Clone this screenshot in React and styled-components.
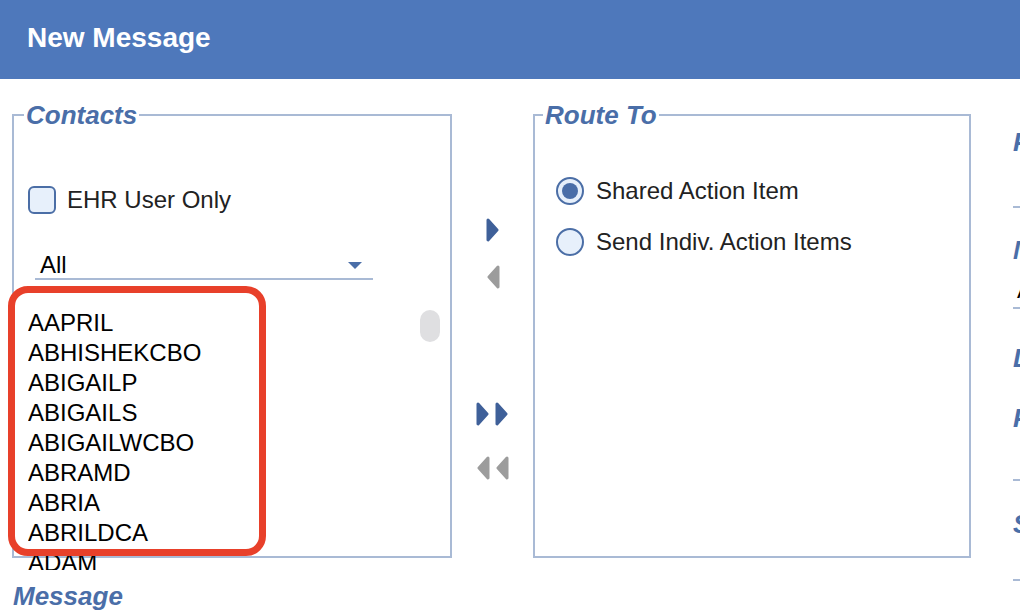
import React from 'react';
import styled, { createGlobalStyle } from 'styled-components';

const GlobalStyle = createGlobalStyle`
    body {
        margin: 0;
        font-family: "Liberation Sans", Arial, sans-serif;
        background: #fff;
    }
`;

const Page = styled.div`
    width: 1020px;
    height: 614px;
    overflow: hidden;
    background: #fff;
`;

const Header = styled.div`
    height: 79px;
    box-sizing: border-box;
    background: #4e78bb;
    display: flex;
    align-items: center;
    padding: 0 0 3px 27px;
    color: #fff;
    font-size: 28px;
    font-weight: bold;
`;

const Main = styled.div`
    display: flex;
    align-items: flex-start;
    padding-top: 21px;
`;

const LeftColumn = styled.div`
    display: flex;
    flex-direction: column;
    flex-shrink: 0;
    padding-left: 12px;
`;

const Panel = styled.fieldset`
    box-sizing: border-box;
    flex-shrink: 0;
    width: ${(p) => p.$width}px;
    height: 458px;
    margin: 0;
    padding: 0 0 0 ${(p) => p.$padLeft}px;
    border: 2px solid #a9bad5;
    min-width: 0;
`;

const Legend = styled.legend`
    font-size: 26px;
    line-height: 30px;
    font-weight: bold;
    font-style: italic;
    color: #4a6ea8;
    padding: 0 2px;
    margin-left: -4px;
`;

const CheckRow = styled.label`
    display: flex;
    align-items: center;
    gap: 11px;
    margin-top: 56px;
    font-size: 24px;
    line-height: 28px;
    color: #222;
`;

const CheckBox = styled.span`
    box-sizing: border-box;
    width: 28px;
    height: 28px;
    border: 2px solid #4b6ea6;
    border-radius: 6px;
    background: #e7f0fb;
`;

const Select = styled.div`
    box-sizing: border-box;
    display: flex;
    align-items: center;
    justify-content: space-between;
    margin: 30px 0 0 7px;
    width: 338px;
    height: 36px;
    padding: 8px 11px 0 5px;
    border-bottom: 2px solid #a9bad5;
    font-size: 24px;
    color: #000;
`;

const Caret = styled.span`
    width: 0;
    height: 0;
    border-left: 7.5px solid transparent;
    border-right: 7.5px solid transparent;
    border-top: 7px solid #4a6ea8;
`;

const ListWrap = styled.div`
    position: relative;
    margin-top: 20px;
`;

const ListViewport = styled.div`
    display: flex;
    height: 270px;
    overflow: hidden;
`;

const Names = styled.div`
    flex: 1;
    padding-top: 8px;
`;

const Name = styled.div`
    height: 30px;
    line-height: 30px;
    font-size: 24px;
    color: #000;
`;

const Track = styled.div`
    width: 20px;
    margin-right: 10px;
    padding-top: 10px;
`;

const Thumb = styled.div`
    height: 32px;
    border-radius: 10px;
    background: #dfdfe1;
`;

const Highlight = styled.div`
    position: absolute;
    left: -20px;
    top: -14px;
    width: 258px;
    height: 270px;
    box-sizing: border-box;
    border: 7px solid #e8402a;
    border-radius: 20px;
    pointer-events: none;
`;

const SectionTitle = styled.div`
    margin: 23px 0 0 1px;
    font-size: 26px;
    line-height: 30px;
    font-weight: bold;
    font-style: italic;
    color: #4a6ea8;
`;

const ArrowColumn = styled.div`
    width: 81px;
    flex-shrink: 0;
    display: flex;
    flex-direction: column;
    align-items: center;
    padding-top: 118px;
`;

const ArrowButton = styled.div`
    display: flex;
    margin-top: ${(p) => p.$gap || 0}px;
    cursor: pointer;
`;

const RadioList = styled.div`
    display: flex;
    flex-direction: column;
    gap: 23px;
    margin: 47px 0 0 9px;
`;

const RadioRow = styled.label`
    display: flex;
    align-items: center;
    gap: 12px;
    font-size: 24px;
    line-height: 28px;
    color: #222;
`;

const Radio = styled.span`
    box-sizing: border-box;
    width: 28px;
    height: 28px;
    border: 2px solid #4b6ea6;
    border-radius: 50%;
    background: #e7f0fb;
    display: flex;
    align-items: center;
    justify-content: center;

    &::after {
        content: '';
        width: 16px;
        height: 16px;
        border-radius: 50%;
        background: ${(p) => (p.$checked ? '#4a6ea8' : 'transparent')};
    }
`;

const RightColumn = styled.div`
    width: 300px;
    flex-shrink: 0;
    margin-left: 42px;
    display: flex;
    flex-direction: column;
`;

const FieldLabel = styled.div`
    margin-top: ${(p) => p.$gap}px;
    font-size: 26px;
    line-height: 30px;
    font-weight: bold;
    font-style: italic;
    color: #4a6ea8;
`;

const FieldInput = styled.div`
    box-sizing: border-box;
    height: ${(p) => p.$height}px;
    border-bottom: 2px solid #a9bad5;
    display: flex;
    align-items: flex-end;
    padding: 0 0 3px 4px;
    font-size: 24px;
    color: #000;
`;

const blue = '#3f6099';
const grey = '#9c9c9c';

const Tri = ({ dir, color, x = 0 }) => {
    const pts = dir === 'right' ? `${x + 2},2 ${x + 11},12 ${x + 2},22` : `${x + 12},2 ${x + 3},12 ${x + 12},22`;
    return <polygon points={pts} fill={color} stroke={color} strokeWidth="3" strokeLinejoin="round" />;
};

const Arrow = ({ dir, color, double }) => (
    <svg width={double ? 33 : 14} height="24" viewBox={`0 0 ${double ? 33 : 14} 24`}>
        <Tri dir={dir} color={color} />
        {double && <Tri dir={dir} color={color} x={19} />}
    </svg>
);

const contacts = [
    'AAPRIL',
    'ABHISHEKCBO',
    'ABIGAILP',
    'ABIGAILS',
    'ABIGAILWCBO',
    'ABRAMD',
    'ABRIA',
    'ABRILDCA',
    'ADAM',
    'ADAMB',
];

const App = () => {
    return (
        <Page>
            <GlobalStyle />
            <Header>New Message</Header>
            <Main>
                <LeftColumn>
                    <Panel $width={440} $padLeft={14}>
                        <Legend>Contacts</Legend>
                        <CheckRow>
                            <CheckBox />
                            EHR User Only
                        </CheckRow>
                        <Select>
                            <span>All</span>
                            <Caret />
                        </Select>
                        <ListWrap>
                            <ListViewport>
                                <Names>
                                    {contacts.map((c) => (
                                        <Name key={c}>{c}</Name>
                                    ))}
                                </Names>
                                <Track>
                                    <Thumb />
                                </Track>
                            </ListViewport>
                            <Highlight />
                        </ListWrap>
                    </Panel>
                    <SectionTitle>Message</SectionTitle>
                </LeftColumn>

                <ArrowColumn>
                    <ArrowButton>
                        <Arrow dir="right" color={blue} />
                    </ArrowButton>
                    <ArrowButton $gap={23}>
                        <Arrow dir="left" color={grey} />
                    </ArrowButton>
                    <ArrowButton $gap={113}>
                        <Arrow dir="right" color={blue} double />
                    </ArrowButton>
                    <ArrowButton $gap={30}>
                        <Arrow dir="left" color={grey} double />
                    </ArrowButton>
                </ArrowColumn>

                <Panel $width={438} $padLeft={12}>
                    <Legend>Route To</Legend>
                    <RadioList>
                        <RadioRow>
                            <Radio $checked />
                            Shared Action Item
                        </RadioRow>
                        <RadioRow>
                            <Radio />
                            Send Indiv. Action Items
                        </RadioRow>
                    </RadioList>
                </Panel>

                <RightColumn>
                    <FieldLabel $gap={27}>Priority</FieldLabel>
                    <FieldInput $height={51} />
                    <FieldLabel $gap={27}>Message Type</FieldLabel>
                    <FieldInput $height={44}>Action Item</FieldInput>
                    <FieldLabel $gap={34}>Due Date</FieldLabel>
                    <FieldLabel $gap={30}>Patient</FieldLabel>
                    <FieldInput $height={48} />
                    <FieldLabel $gap={28}>Subject</FieldLabel>
                    <FieldInput $height={42} />
                </RightColumn>
            </Main>
        </Page>
    );
};

export default App;
